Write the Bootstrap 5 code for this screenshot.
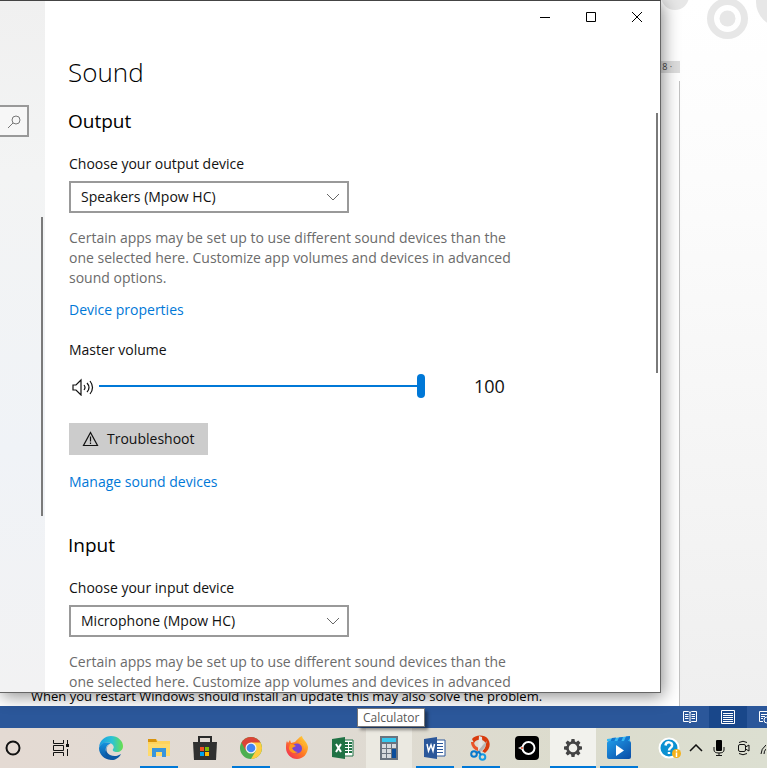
<!DOCTYPE html>
<html lang="en">
<head>
<meta charset="utf-8">
<meta name="viewport" content="width=device-width, initial-scale=1">
<title>Sound settings</title>
<link href="https://cdn.jsdelivr.net/npm/bootstrap@5.3.0/dist/css/bootstrap.min.css" rel="stylesheet">
<style>
body{font-family:"Open Sans","Noto Sans",sans-serif;font-size:14px;line-height:20px;color:#111;background:#eee}
button{font-family:inherit;color:inherit}
svg{display:block;flex:none}
.desktop{height:100vh;min-height:400px}
/* Document behind the settings window */
.docarea{background:linear-gradient(#fff,#fcfcfc 25%,#efefef)}
.sheet{width:680px;background:#fff}
.sheet-edge{border-right:1px solid #c2c2c2}
.sheet-top{height:61px}
.ruler{height:12px;background:#ddd;font-size:9px;line-height:12px;color:#444}
.doc-line{font-size:13px;line-height:20px;padding-left:31px;color:#000}
.circles{left:660px;top:0}
/* Settings window */
.settings{top:0;left:0;right:106px;bottom:75px;border:solid #666;border-width:1px 1px 1px 0;border-top-color:#444;background:#fff;box-shadow:2px 3px 16px rgba(0,0,0,.45)}
.side{width:45px;background:linear-gradient(#f0f0f0,#f3f4f4 25%,#f0f3f7 65%,#f2f2f3)}
.side-search{margin-top:104px;width:29px;height:32px;border:2px solid #999;border-left:0;background:#f7f7f7;padding:0 0 0 8px}
.thumb-bar{width:2px;background:#7a7a7a}
.thumb-side{left:41px;top:216px;height:299px}
.thumb-main{right:2px;top:112px;height:260px}
.winbar{height:33px}
.winbtn{width:46px;height:32px;border:0;background:none;padding:0}
.content{padding:20px 24px 0 23px}
.content>*{margin-left:1px}
.content>.page-title,.content>.group-title{margin-left:0}
.page-title{font-size:26px;line-height:36px;font-weight:300;margin:0 0 17px;color:#000}
.group-title{font-size:19px;line-height:28px;font-weight:400;margin:0 0 19px;color:#000}
.field-label{margin-bottom:7px;display:block;width:max-content}
.picker{width:280px;height:32px;border:2px solid #999;border-radius:0;padding:0 34px 0 10px;font-size:14px;line-height:20px;color:#111;background-color:#fff;background-size:14px 14px;background-position:right 7px center;background-image:url("data:image/svg+xml,%3Csvg xmlns='http://www.w3.org/2000/svg' viewBox='0 0 14 14'%3E%3Cpath d='M1 4l6 6 6-6' fill='none' stroke='%23666'/%3E%3C/svg%3E")}
.note{color:#6b6b6b;max-width:456px;margin-top:15px;margin-bottom:12px}
.link-blue{color:#0078d7;text-decoration:none;width:max-content;display:block}
.vol-row{margin-top:14px;gap:5px;padding-left:2px}
.vol{appearance:none;width:326px;height:24px;margin:0;background:none}
.vol::-webkit-slider-runnable-track{height:2px;background:#0078d7}
.vol::-webkit-slider-thumb{appearance:none;width:8px;height:24px;margin-top:-11px;border-radius:4px;background:#0078d7}
.vol-num{font-size:18px;line-height:24px;margin-left:44px}
.fix-btn{margin-top:25px;margin-bottom:17px;height:32px;border:0;border-radius:0;background:#ccc;padding:0 13px;gap:8px;line-height:20px}
.fix-btn:hover{background:#bbb}
.manage{margin-bottom:39px}
/* Word status bar */
.status{height:22px;background:#2b579a}
.view-btn{border:0;background:none;height:22px;width:38px;padding:0}
.view-btn.current{background:#19478a}
/* Taskbar */
.taskbar{height:40px;background:linear-gradient(90deg,#e4dad3,#dfdad2 45%,#dcdccd 75%,#dcdfd1)}
.task-start{width:136px;display:grid;grid-template-columns:26px 70px 30px}
.task{border:0;background:none;padding:0;height:40px;display:flex;align-items:center;justify-content:center}
.app{width:46px}
.open{background:linear-gradient(#0078d7,#0078d7) center bottom/38px 2px no-repeat}
.hovered{background:#ebe9e1}
.active-app{background:linear-gradient(#0078d7,#0078d7) center bottom/100% 2px no-repeat #f2f2ed}
.tray{display:grid;grid-template-columns:26px 26px 20px 30px 8px}
.hint{left:357px;bottom:41px;border:1px solid #767676;background:#fff;color:#575757;font-size:12px;line-height:17px;padding:0 5px;box-shadow:3px 3px 3px rgba(0,0,0,.4)}
</style>
</head>
<body>
<div class="desktop d-flex flex-column position-relative overflow-hidden">
  <main class="docarea flex-grow-1 d-flex position-relative">
    <svg class="circles position-absolute" width="107" height="60" fill="#e7e7e7"><circle cx="15" cy="-4" r="14"/><circle cx="67.500" cy="18.500" r="17" fill="none" stroke="#e7e7e7" stroke-width="7"/><circle cx="67.500" cy="18.500" r="8"/><circle cx="121" cy="2" r="25"/></svg>
    <div class="sheet d-flex flex-column">
      <div class="sheet-top"></div>
      <div class="ruler text-end pe-2">18 ·</div>
      <div class="sheet-edge flex-grow-1 mt-2 d-flex flex-column justify-content-end">
        <div class="doc-line">When you restart Windows should install an update this may also solve the problem.</div>
      </div>
    </div>
  </main>
  <footer class="status d-flex justify-content-end overflow-hidden">
    <button class="view-btn d-flex align-items-center justify-content-center" aria-label="Read mode"><svg width="14" height="14" fill="none" stroke="#fff"><path d="M.5 1.500h5l1.500 1 1.500-1h5v10h-5L7 13l-1.500-1.500h-5zM7 2v11M2 4.500h3.500M2 6.500h3.500M2 8.500h3.500M8.500 4.500H12M8.500 6.500H12M8.500 8.500H12"/></svg></button>
    <button class="view-btn current d-flex align-items-center justify-content-center" aria-label="Print layout"><svg width="14" height="14" fill="none" stroke="#fff"><path d="M.5.5h13v13H.5zM2 3.500h10M2 5.500h10M2 7.500h10M2 9.500h10M2 11.500h10"/></svg></button>
    <div class="overflow-hidden d-flex align-items-center ps-2"><button class="border-0 bg-transparent p-0 ps-1 overflow-hidden" aria-label="Web layout"><svg width="8" height="14" viewBox="0 0 8 14" fill="none" stroke="#fff"><path d="M8 1.500H.5v10H4M2 4.500h6M2 6.500h4M2 8.500h2"/><circle cx="8" cy="10" r="3"/></svg></button></div>
  </footer>
  <nav class="taskbar d-flex flex-shrink-0 overflow-hidden" aria-label="Taskbar">
    <div class="task-start flex-shrink-0">
      <button class="task" aria-label="Cortana"><svg width="18" height="18"><circle cx="9" cy="9" r="6.500" fill="none" stroke="#111" stroke-width="2"/></svg></button>
      <button class="task" aria-label="Task view"><svg width="18" height="16" fill="none" stroke="#111"><path d="M1.500 0v3.500h10V0M1.500 16v-3.500h10V16M1.500 5.500h10v5h-10zM15.500 0v4M15.500 9v7"/><path d="M14 4h3v3h-3z" fill="#111" stroke="none"/></svg></button>
      <button class="task" aria-label="Edge"><svg width="24" height="24" viewBox="0 0 24 24"><defs><linearGradient id="e1" x2="1"><stop stop-color="#1b9de2"/><stop offset=".55" stop-color="#2cc3d5"/><stop offset="1" stop-color="#69e04b"/></linearGradient><linearGradient id="e2" y2="1" x2="0"><stop stop-color="#1593de"/><stop offset="1" stop-color="#0b4f9e"/></linearGradient></defs><path d="M0 11C1 4 6 0 12 0c7 0 12 5 12 10 0 4-3 6-6 6-3 0-5-1-4-3 1-1 1-2 0-4C11 5 3 6 0 11z" fill="url(#e1)"/><path d="M0 12C1 7 8 5 12 8c-4 0-6 4-5 8 1 5 5 7 9 7C8 26 0 20 0 12z" fill="url(#e2)"/><path d="M10 9c-4 3-3 8 1 10 4 2 8 1 11-1-2 4-6 6-9 6-5-1-8-6-6-10 0-2 1-4 3-5z" fill="#0c59a4"/></svg></button>
    </div>
    <button class="task app open flex-shrink-0" aria-label="File Explorer"><svg width="22" height="20"><path d="M0 1h8l2 2h12v15H0z" fill="#ffd35c"/><path d="M0 1h8l1 3H0z" fill="#d9930c"/><path d="M0 6h22v12H0z" fill="#ffda6b"/><path d="M4 10h14v9h-4v-5H8v5H4z" fill="#3995dc"/></svg></button>
    <button class="task app flex-shrink-0" aria-label="Store"><svg width="24" height="24"><path d="M6 6V1h12v5" fill="none" stroke="#2a2a2a" stroke-width="2"/><path d="M0 6h24l-1 18H1z" fill="#303030"/><path d="M7 11h4v4H7z" fill="#f25022"/><path d="M12 11h4v4h-4z" fill="#7fba00"/><path d="M7 16h4v4H7z" fill="#00a4ef"/><path d="M12 16h4v4h-4z" fill="#ffb900"/></svg></button>
    <button class="task app open flex-shrink-0" aria-label="Chrome"><svg width="22" height="22" viewBox="0 0 22 22"><circle cx="11" cy="11" r="11" fill="#4caf50"/><path d="M11 11L1.500 5.500A11 11 0 0 1 20.500 5.500z" fill="#db4437"/><path d="M11 5.500h9.500A11 11 0 0 1 11 22l5-8.500z" fill="#ffcd40"/><path d="M1.500 5.500L6 14l5-8.500z" fill="#db4437"/><circle cx="11" cy="11" r="5.500" fill="#f4f4f4"/><circle cx="11" cy="11" r="4.300" fill="#4285f4"/></svg></button>
    <button class="task app flex-shrink-0" aria-label="Firefox"><svg width="24" height="24" viewBox="0 0 24 24"><defs><linearGradient id="f1" x1="1" x2="0" y2="1"><stop stop-color="#ffe53b"/><stop offset=".5" stop-color="#ff7a24"/><stop offset="1" stop-color="#ef2060"/></linearGradient></defs><path d="M2 5l1 2 2-3 1 3 4-1c2-2 4-5 7-6 0 3 5 5 6 11 0 7-5 12-11 12S1 18 1 12c0-3 0-5 1-7z" fill="url(#f1)"/><circle cx="12" cy="12.500" r="5" fill="#7745d5"/><path d="M5 8c3 0 4 1 6 2l-4 2c1 2 3 4 6 4-5 3-9-1-9-4z" fill="#ff9a1c"/><path d="M13 6c5 0 7 4 6 8 2-5-2-9-6-8z" fill="#ffc130"/></svg></button>
    <button class="task app flex-shrink-0" aria-label="Excel"><svg width="24" height="24"><path d="M12 4h10v16H12z" fill="#fff" stroke="#217346"/><path d="M14 7h3M18 7h3M14 10h3M18 10h3M14 13h3M18 13h3M14 16h3M18 16h3" stroke="#217346" stroke-width="2"/><path d="M1 3l13-2v22L1 21z" fill="#207245"/><path d="M5 8l5 8M10 8l-5 8" stroke="#fff" stroke-width="2"/></svg></button>
    <button class="task app hovered flex-shrink-0" aria-label="Calculator"><svg width="18" height="24"><path d="M0 0h18v24H0z" fill="#69737f"/><path d="M2 2h14v4H2z" fill="#35c8ef"/><path d="M2 8h4v4H2zM7 8h4v4H7zM12 8h4v4h-4zM2 13h4v4H2zM7 13h4v4H7zM2 18h4v4H2zM7 18h4v4H7z" fill="#d6dade"/><path d="M12 13h4v9h-4z" fill="#0a4d9c"/></svg></button>
    <button class="task app open flex-shrink-0" aria-label="Word"><svg width="24" height="24"><path d="M12 4h10v16H12z" fill="#fff" stroke="#2b579a"/><path d="M14 7.500h6M14 10.500h6M14 13.500h6M14 16.500h6" stroke="#2b579a"/><path d="M1 3l13-2v22L1 21z" fill="#2b579a"/><path d="M4 8l1.500 7L8 9l2 6 1.500-7" fill="none" stroke="#fff" stroke-width="1.500"/></svg></button>
    <button class="task app open flex-shrink-0" aria-label="Snipping Tool"><svg width="22" height="26" viewBox="0 0 22 26"><path d="M2 4C5 0 14-1 18 4c3 5 2 10-3 14l-3-2c4-3 5-7 2-10C11 4 6 4 4 8z" fill="#d83b0d"/><path d="M1 7c0 4 3 8 7 9l1-3c-3-1-5-3-5-6z" fill="#e9552a"/><path d="M9 1l3 1 1 13-3 3-2-3z" fill="#e4e4e4"/><path d="M17 6l-2 6-6 7-2-2 6-7z" fill="#b5b5b5"/><circle cx="4" cy="19" r="2.800" fill="none" stroke="#0878cb" stroke-width="2"/><circle cx="12.500" cy="22" r="2.800" fill="none" stroke="#139be4" stroke-width="2"/><path d="M6 18l3-1 2 3" fill="none" stroke="#0878cb" stroke-width="2"/></svg></button>
    <button class="task app flex-shrink-0" aria-label="Camera"><svg width="24" height="24"><rect width="24" height="24" rx="4"/><circle cx="13.500" cy="12" r="6" fill="none" stroke="#fff" stroke-width="2"/><path d="M3 12l4-2v4z" fill="#ddd"/><circle cx="7" cy="12" r="1" fill="#e54b25"/></svg></button>
    <button class="task app active-app flex-shrink-0" aria-label="Settings"><svg width="20" height="20" viewBox="-10 -10 20 20"><g fill="#444"><path id="tooth" d="M-2-6l.5-3h3l.5 3z"/><use href="#tooth" transform="rotate(45)"/><use href="#tooth" transform="rotate(90)"/><use href="#tooth" transform="rotate(135)"/><use href="#tooth" transform="rotate(180)"/><use href="#tooth" transform="rotate(225)"/><use href="#tooth" transform="rotate(270)"/><use href="#tooth" transform="rotate(315)"/></g><circle r="5.500" fill="none" stroke="#444" stroke-width="2.500"/></svg></button>
    <button class="task app open flex-shrink-0" aria-label="Video Editor"><svg width="24" height="24"><defs><linearGradient id="v1" x2="1" y2="1"><stop stop-color="#1f9ae8"/><stop offset="1" stop-color="#0a4ba4"/></linearGradient></defs><path d="M0 3l23-3v5H0z" fill="#36b8f2"/><path d="M5 2l4-.5L7 6H3zM12 1.500l4-.5-2 5h-4zM19 .5l4-.5v2l-2 3h-4z" fill="#1477cf"/><rect y="5" width="24" height="18" rx="2" fill="url(#v1)"/><path d="M9 9v11l8-5.500z" fill="#fff"/></svg></button>
    <div class="tray ms-auto flex-shrink-0 overflow-hidden">
      <button class="task" aria-label="Help"><svg width="24" height="22"><circle cx="11" cy="11" r="9.500" fill="#0b91d2" stroke="#fff" stroke-width="2"/><path d="M7.500 8.500C8 4 15 4.500 14 9c-.5 2-3 2-3 4.500M11 15v2" fill="none" stroke="#fff" stroke-width="2.500"/><circle cx="18.500" cy="16.500" r="4.500" fill="#f5b21c"/><path d="M18.500 13v1.500M18.500 15.500V20" stroke="#fff" stroke-width="1.500"/></svg></button>
      <button class="task" aria-label="Show hidden icons"><svg width="14" height="8" fill="none" stroke="#111" stroke-width="1.500"><path d="M1 7l6-6 6 6"/></svg></button>
      <button class="task" aria-label="Microphone"><svg width="12" height="16"><rect x="3" width="6" height="11" rx="1"/><path d="M1 7v3q0 3 5 3t5-3V7M6 13v2.500M3 15.500h6" fill="none" stroke="#111"/></svg></button>
      <button class="task" aria-label="Meet now"><svg width="14" height="16" fill="none" stroke="#111"><rect x="1.500" y="4.500" width="7" height="7" rx="1.500"/><path d="M8.500 7L12 5v6L8.500 9M2 2.500Q6 0 10 2.500M2 13.500q4 2.500 8 0"/></svg></button>
      <button class="task" aria-label="Network"><svg width="6" height="14" viewBox="0 0 6 14" fill="none" stroke="#111"><path d="M1 13q0-5 5-9M4 13q0-3 2-5"/></svg></button>
    </div>
  </nav>

  <section class="settings position-absolute d-flex overflow-visible" aria-label="Settings">
    <aside class="side flex-shrink-0 position-relative">
      <button class="side-search d-flex align-items-center" aria-label="Find a setting"><svg width="13" height="13" fill="none" stroke="#777"><circle cx="8" cy="5" r="4"/><path d="M5 8L0 13"/></svg></button>
      <div class="thumb-bar thumb-side position-absolute"></div>
    </aside>
    <div class="flex-grow-1 overflow-hidden position-relative">
      <div class="winbar d-flex justify-content-end">
        <button class="winbtn d-flex align-items-center justify-content-center" aria-label="Minimize"><svg width="10" height="10"><path d="M0 5.500h10" stroke="#000"/></svg></button>
        <button class="winbtn d-flex align-items-center justify-content-center" aria-label="Maximize"><svg width="10" height="10"><path d="M.5.5h9v9h-9z" fill="none" stroke="#000"/></svg></button>
        <button class="winbtn d-flex align-items-center justify-content-center" aria-label="Close"><svg width="10" height="10"><path d="M0 0l10 10M10 0L0 10" stroke="#000"/></svg></button>
      </div>
      <div class="content">
        <h1 class="page-title">Sound</h1>
        <h2 class="group-title">Output</h2>
        <label class="field-label" for="out">Choose your output device</label>
        <select class="form-select picker" id="out"><option>Speakers (Mpow HC)</option></select>
        <p class="note">Certain apps may be set up to use different sound devices than the one selected here. Customize app volumes and devices in advanced sound options.</p>
        <a class="link-blue mb-3 pb-1" href="#">Device properties</a>
        <label class="d-block" for="vol">Master volume</label>
        <div class="vol-row d-flex align-items-center">
          <svg width="23" height="20" fill="none" stroke="#111" stroke-width="1.200"><path d="M2 9h3l5-5v15l-5-5H2zM13 9q2 2.500 0 5M16 7q4 4.500 0 9M19 5q5 6.500 0 13"/></svg>
          <input class="vol" type="range" id="vol" min="0" max="100" value="100">
          <output class="vol-num" for="vol">100</output>
        </div>
        <button class="fix-btn d-flex align-items-center"><svg width="17" height="16" fill="none" stroke="#111" stroke-width="1.200"><path d="M8.500 1.500L15.500 14.500h-14zM8.500 5.500v5M8.500 11.500v1.500"/></svg>Troubleshoot</button>
        <a class="link-blue manage" href="#">Manage sound devices</a>
        <h2 class="group-title">Input</h2>
        <label class="field-label" for="inp">Choose your input device</label>
        <select class="form-select picker" id="inp"><option>Microphone (Mpow HC)</option></select>
        <p class="note">Certain apps may be set up to use different sound devices than the one selected here. Customize app volumes and devices in advanced sound options.</p>
      </div>
      <div class="thumb-bar thumb-main position-absolute"></div>
    </div>
  </section>
  <div class="hint position-absolute" role="tooltip">Calculator</div>
</div>
<script src="https://cdn.jsdelivr.net/npm/bootstrap@5.3.0/dist/js/bootstrap.bundle.min.js"></script>
</body>
</html>
